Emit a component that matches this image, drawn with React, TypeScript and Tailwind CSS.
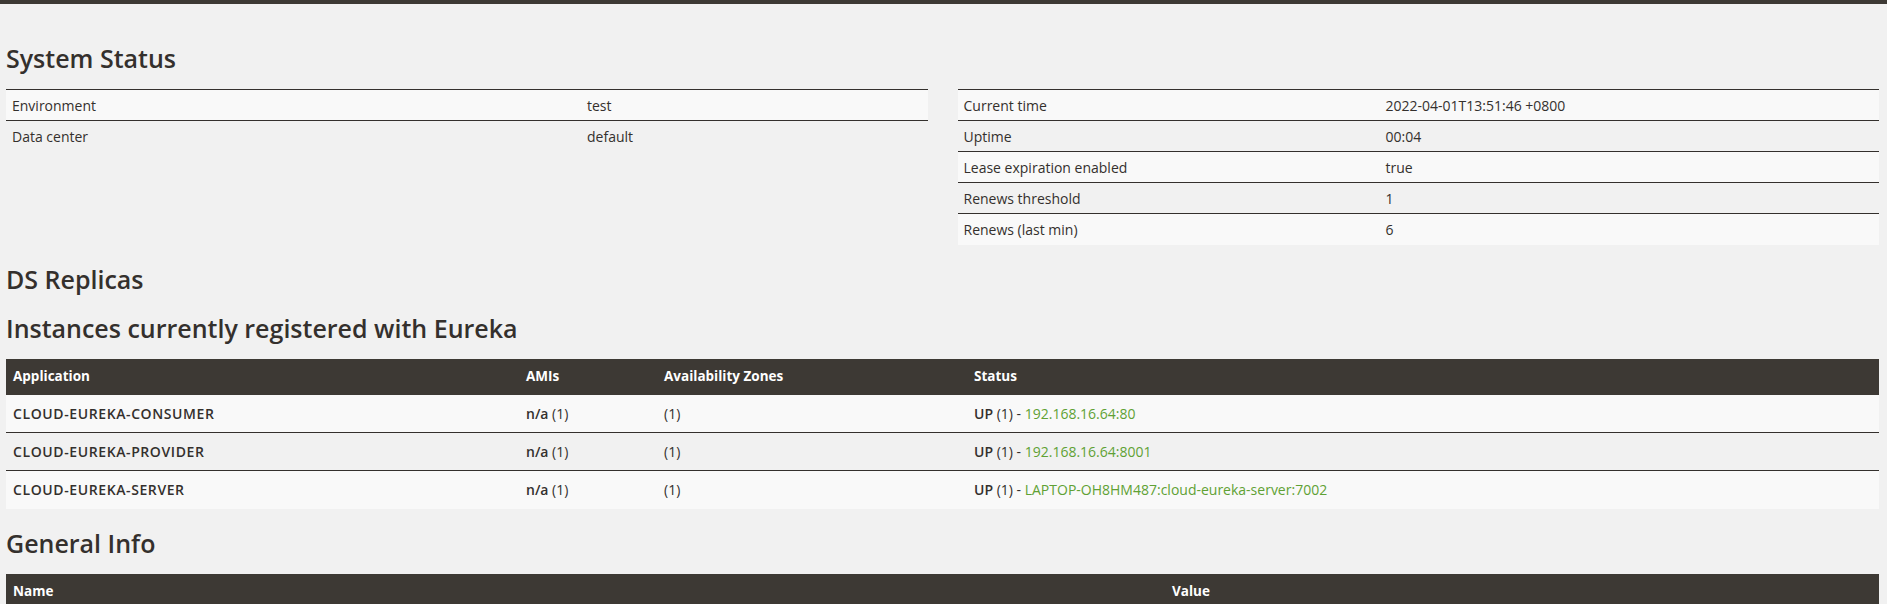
import React from "react";

const body = { fontFamily: '"Open Sans", "Noto Sans", sans-serif' };
const head = { fontFamily: '"Open Sans", "Noto Sans", sans-serif' };

function H2({ children, first }: { children: React.ReactNode; first?: boolean }) {
  return (
    <h2
      style={head}
      className={`text-[25px] leading-[30px] font-semibold text-[#34302d] ${first ? "mt-0" : "mt-[19px]"} mb-[16px]`}
    >
      {children}
    </h2>
  );
}

function KVTable({ rows, labelW }: { rows: [string, string][]; labelW: string }) {
  return (
    <table className="w-full border-collapse text-[14px] text-[#34302d]" style={{ tableLayout: "fixed" }}>
      <colgroup>
        <col style={{ width: labelW }} />
        <col />
      </colgroup>
      <tbody>
        {rows.map(([k, v], i) => (
          <tr key={k} className={`${i % 2 === 0 ? "bg-[#f9f9f9]" : "bg-[#f1f1f1]"} border-t border-[#34302d]`}>
            <td className="h-[31px] px-[6px] py-0 align-middle">{k}</td>
            <td className="h-[31px] px-[6px] py-0 align-middle">{v}</td>
          </tr>
        ))}
      </tbody>
    </table>
  );
}

const apps: [string, string][] = [
  ["CLOUD-EUREKA-CONSUMER", "192.168.16.64:80"],
  ["CLOUD-EUREKA-PROVIDER", "192.168.16.64:8001"],
  ["CLOUD-EUREKA-SERVER", "LAPTOP-OH8HM487:cloud-eureka-server:7002"],
];

export default function App() {
  return (
    <div style={body} className="min-h-[604px] bg-[#f1f1f1] text-[#34302d] overflow-hidden">
      <div className="h-[4px] bg-[#3d3934]" />
      <div className="pl-[6px] pr-[8px] pt-[39px]">
        <H2 first>System Status</H2>
        <div className="flex gap-[30px] items-start">
          <div className="flex-1">
            <KVTable
              labelW="575px"
              rows={[
                ["Environment", "test"],
                ["Data center", "default"],
              ]}
            />
          </div>
          <div className="flex-1">
            <KVTable
              labelW="422px"
              rows={[
                ["Current time", "2022-04-01T13:51:46 +0800"],
                ["Uptime", "00:04"],
                ["Lease expiration enabled", "true"],
                ["Renews threshold", "1"],
                ["Renews (last min)", "6"],
              ]}
            />
          </div>
        </div>

        <H2>DS Replicas</H2>
        <H2>Instances currently registered with Eureka</H2>
        <table className="w-full border-collapse text-[14px] text-[#34302d]" style={{ tableLayout: "fixed" }}>
          <colgroup>
            <col style={{ width: "513px" }} />
            <col style={{ width: "138px" }} />
            <col style={{ width: "310px" }} />
            <col />
          </colgroup>
          <thead>
            <tr className="bg-[#3d3934] text-white text-left">
              <th className="h-[36px] px-[7px] font-bold text-[13.5px]">Application</th>
              <th className="h-[36px] px-[7px] font-bold text-[13.5px]">AMIs</th>
              <th className="h-[36px] px-[7px] font-bold text-[13.5px]">Availability Zones</th>
              <th className="h-[36px] px-[7px] font-bold text-[13.5px]">Status</th>
            </tr>
          </thead>
          <tbody>
            {apps.map(([name, addr], i) => (
              <tr
                key={name}
                className={`${i % 2 === 0 ? "bg-[#f9f9f9]" : "bg-[#f1f1f1]"} ${i > 0 ? "border-t border-[#34302d]" : ""}`}
              >
                <td className="h-[38px] px-[7px] font-semibold text-[14px] tracking-[0.6px]">{name}</td>
                <td className="h-[38px] px-[7px]">
                  <b className="font-semibold">n/a</b> (1)
                </td>
                <td className="h-[38px] px-[7px]">(1)</td>
                <td className="h-[38px] px-[7px]">
                  <b className="font-semibold">UP</b> (1) - <a className="text-[#5fa134]">{addr}</a>
                </td>
              </tr>
            ))}
          </tbody>
        </table>

        <H2>General Info</H2>
        <table className="w-full border-collapse text-[14px]" style={{ tableLayout: "fixed" }}>
          <colgroup>
            <col style={{ width: "1159px" }} />
            <col />
          </colgroup>
          <thead>
            <tr className="bg-[#3d3934] text-white text-left">
              <th className="h-[36px] px-[7px] font-bold text-[13.5px]">Name</th>
              <th className="h-[36px] px-[7px] font-bold text-[13.5px]">Value</th>
            </tr>
          </thead>
        </table>
      </div>
    </div>
  );
}
